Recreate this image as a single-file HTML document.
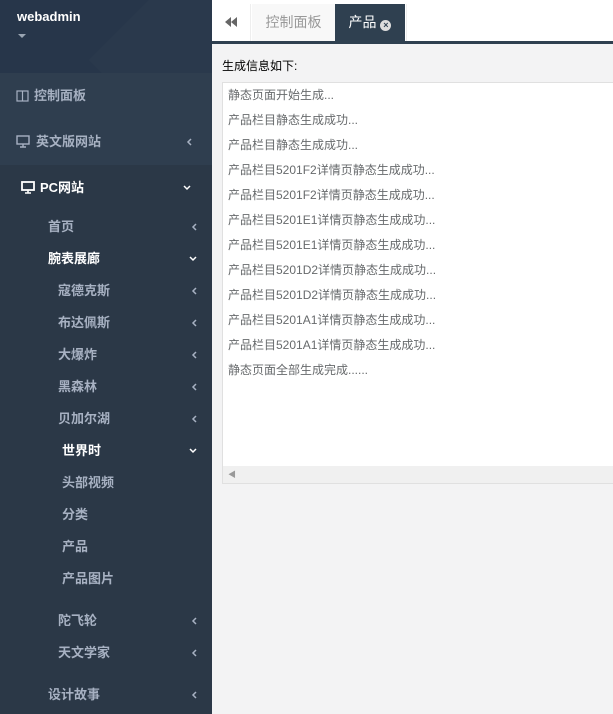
<!DOCTYPE html>
<html><head><meta charset="utf-8"><style>
*{margin:0;padding:0;box-sizing:border-box}
body{width:613px;height:714px;overflow:hidden;background:#f3f3f4;font-family:"Liberation Sans","Noto Sans CJK SC",sans-serif;position:relative}
#sb{position:absolute;left:0;top:0;width:212px;height:714px;background:#2b3847}
#hd{height:73px;background:#27364a;position:relative;overflow:hidden}
#hd .n{position:absolute;left:17px;top:9px;color:#fff;font-weight:bold;font-size:13px;z-index:2}
#hd .c{position:absolute;left:18px;top:34px;width:0;height:0;border-left:4px solid transparent;border-right:4px solid transparent;border-top:4px solid #9aa5b2;z-index:2}
.it{position:absolute;left:0;font-size:13px;font-weight:bold;color:#a7b1c2;line-height:16px}
.ar{position:absolute;left:189px}
#main{position:absolute;left:212px;top:0;right:0}
#tb{height:44px;background:#fff;border-bottom:3px solid #2f4050;position:relative}
.tab{position:absolute;top:4px;height:37px;line-height:37px;font-size:14px}
#box{position:absolute;left:10px;top:82px;width:400px;height:402px;background:#fff;border:1px solid #e0e0e0}
#box div{font-size:12px;color:#676a6c;height:25px;line-height:25px;padding-left:5px;white-space:nowrap}
</style></head><body>
<div id="sb">
<div id="hd"><div class="n">webadmin</div><div class="c"></div>
<div style="position:absolute;left:130px;top:-40px;width:200px;height:200px;background:#2a394c;transform:rotate(45deg)"></div></div>
<div style="position:absolute;top:73px;left:0;width:212px;height:92px;background:#2f3e4f"></div>
<svg width="212" height="714" style="position:absolute;left:0;top:0" fill="none" stroke="#a7b1c2" stroke-width="1.5">
<g id="l"></g>
<path d="M191 139l-3 3 3 3"/>
<path d="M184 186l3 3 3-3" stroke="#fff"/>
<path d="M196 224l-3 3 3 3"/>
<path d="M190 257l3 3 3-3" stroke="#fff"/>
<path d="M196 288l-3 3 3 3"/>
<path d="M196 320l-3 3 3 3"/>
<path d="M196 352l-3 3 3 3"/>
<path d="M196 384l-3 3 3 3"/>
<path d="M196 416l-3 3 3 3"/>
<path d="M190 449l3 3 3-3" stroke="#fff"/>
<path d="M196 618l-3 3 3 3"/>
<path d="M196 650l-3 3 3 3"/>
<path d="M196 692l-3 3 3 3"/>
<rect x="17" y="91" width="11" height="10" stroke-width="1.2"/><path d="M22.5 91v10" stroke-width="1.2"/>
<rect x="17" y="136" width="12" height="8" stroke-width="1.4"/><path d="M20 147h6M23 144v3" stroke-width="1.4"/>
<rect x="22" y="182" width="12" height="8" stroke="#fff" stroke-width="1.8"/><path d="M25 193h6M28 190v3" stroke="#fff" stroke-width="1.6"/>
</svg>
<div class="it" style="top:88px;left:34px">控制面板</div>
<div class="it" style="top:134px;left:36px">英文版网站</div>
<div class="it" style="top:180px;left:40px;color:#fff">PC网站</div>
<div class="it" style="top:219px;left:48px">首页</div>
<div class="it" style="top:251px;left:48px;color:#fff">腕表展廊</div>
<div class="it" style="top:283px;left:58px">寇德克斯</div>
<div class="it" style="top:315px;left:58px">布达佩斯</div>
<div class="it" style="top:347px;left:58px">大爆炸</div>
<div class="it" style="top:379px;left:58px">黑森林</div>
<div class="it" style="top:411px;left:58px">贝加尔湖</div>
<div class="it" style="top:443px;left:62px;color:#fff">世界时</div>
<div class="it" style="top:475px;left:62px">头部视频</div>
<div class="it" style="top:507px;left:62px">分类</div>
<div class="it" style="top:539px;left:62px">产品</div>
<div class="it" style="top:571px;left:62px">产品图片</div>
<div class="it" style="top:613px;left:58px">陀飞轮</div>
<div class="it" style="top:645px;left:58px">天文学家</div>
<div class="it" style="top:687px;left:48px">设计故事</div>
</div>
<div id="main">
<div id="tb">
<div class="tab" style="left:0;width:39px;border-right:1px solid #eee"><svg width="39" height="37"><path d="M19 18l6-5v10zM13 18l6-5v10z" fill="#666"/></svg></div>
<div class="tab" style="left:40px;width:83px;text-align:center;color:#999;background:#f8f8f8">控制面板</div>
<div class="tab" style="left:123px;width:70px;text-align:center;color:#fff;background:#2f4050">产品 <span style="display:inline-block;width:11px;height:11px;border-radius:50%;background:#ddd;color:#2f4050;font-size:9px;line-height:11px;font-weight:bold;vertical-align:-1px">×</span></div>
<div style="position:absolute;left:194px;top:4px;width:1px;height:37px;background:#eee"></div>
</div>
<div style="position:absolute;left:10px;top:57px;font-size:12px;color:#000">生成信息如下:</div>
<div id="box">
<div>静态页面开始生成...</div>
<div>产品栏目静态生成成功...</div>
<div>产品栏目静态生成成功...</div>
<div>产品栏目5201F2详情页静态生成成功...</div>
<div>产品栏目5201F2详情页静态生成成功...</div>
<div>产品栏目5201E1详情页静态生成成功...</div>
<div>产品栏目5201E1详情页静态生成成功...</div>
<div>产品栏目5201D2详情页静态生成成功...</div>
<div>产品栏目5201D2详情页静态生成成功...</div>
<div>产品栏目5201A1详情页静态生成成功...</div>
<div>产品栏目5201A1详情页静态生成成功...</div>
<div>静态页面全部生成完成......</div>
<span style="position:absolute;left:0;top:383px;width:100%;height:17px;background:#f0f0f0;color:#999;font-size:8px;line-height:17px;padding-left:5px">◀</span>
</div>
</div>
</body></html>
